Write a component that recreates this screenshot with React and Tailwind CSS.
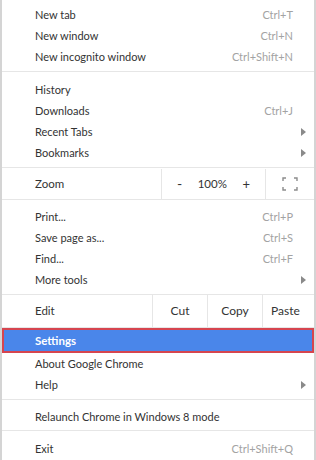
import React from 'react';

const Arrow = () => (
  <svg width="5" height="8" viewBox="0 0 5 8" className="mr-[8px]">
    <path d="M0 0 L5 4 L0 8 Z" fill="#8a8a8a" />
  </svg>
);

const Sep = () => <div className="h-px bg-[#e6e6e6]" />;

const Row = ({ label, shortcut, sub }) => (
  <div className="h-[21px] flex items-center pl-[33px] pt-[1px]">
    <span className="flex-1 text-[#333]">{label}</span>
    {shortcut && <span className="text-[#a3a3a3] mr-[21px]">{shortcut}</span>}
    {sub && <Arrow />}
  </div>
);

const FullscreenIcon = () => (
  <svg width="16" height="14" viewBox="0 0 16 14" fill="none" stroke="#8c8c8c" strokeWidth="1.4">
    <path d="M1 4 V1 H4" />
    <path d="M12 1 H15 V4" />
    <path d="M15 10 V13 H12" />
    <path d="M4 13 H1 V10" />
  </svg>
);

export default function App() {
  return (
    <div
      className="w-[316px] h-[460px] overflow-hidden bg-white border-x-2 border-[#d4d4d4] text-[11px]"
      style={{ fontFamily: 'Lato, "Noto Sans", sans-serif' }}
    >
      <div className="pt-[4px] pb-[4px]">
        <Row label="New tab" shortcut="Ctrl+T" />
        <Row label="New window" shortcut="Ctrl+N" />
        <Row label="New incognito window" shortcut="Ctrl+Shift+N" />
      </div>
      <Sep />
      <div className="pt-[7px] pb-[4px]">
        <Row label="History" />
        <Row label="Downloads" shortcut="Ctrl+J" />
        <Row label="Recent Tabs" sub />
        <Row label="Bookmarks" sub />
      </div>
      <Sep />
      <div className="h-[31px] flex items-stretch pt-[1px]">
        <div className="flex-1 flex items-center pl-[33px] text-[#333] text-[11.5px]">Zoom</div>
        <div className="w-[104px] border-l border-[#e6e6e6] flex items-center justify-between px-[15px] text-[#333] text-[11.5px]">
          <span className="text-[14px] leading-none">-</span>
          <span>100%</span>
          <span className="text-[13px] leading-none">+</span>
        </div>
        <div className="w-[49px] border-l border-[#e6e6e6] flex items-center justify-center">
          <FullscreenIcon />
        </div>
      </div>
      <Sep />
      <div className="pt-[6px] pb-[4px]">
        <Row label="Print..." shortcut="Ctrl+P" />
        <Row label="Save page as..." shortcut="Ctrl+S" />
        <Row label="Find..." shortcut="Ctrl+F" />
        <Row label="More tools" sub />
      </div>
      <Sep />
      <div className="h-[32px] flex items-stretch text-[#333] text-[12px]">
        <div className="flex-1 flex items-center pl-[33px] text-[11.5px]">Edit</div>
        <div className="w-[55px] border-l border-[#e6e6e6] flex items-center justify-center">Cut</div>
        <div className="w-[55px] border-l border-[#e6e6e6] flex items-center justify-center">Copy</div>
        <div className="w-[52px] border-l border-[#e6e6e6] flex items-center justify-center pr-[6px]">Paste</div>
      </div>
      <Sep />
      <div className="pb-[4px]">
        <div className="h-[25px] border-2 border-[#d6454f] bg-[#4a86ea] flex items-center pl-[31px] pt-[1px] text-white font-bold text-[11.5px]">
          Settings
        </div>
        <Row label="About Google Chrome" />
        <Row label="Help" sub />
      </div>
      <Sep />
      <div className="pt-[6px] pb-[3px]">
        <Row label="Relaunch Chrome in Windows 8 mode" />
      </div>
      <Sep />
      <div className="pt-[7px]">
        <Row label="Exit" shortcut="Ctrl+Shift+Q" />
      </div>
    </div>
  );
}
